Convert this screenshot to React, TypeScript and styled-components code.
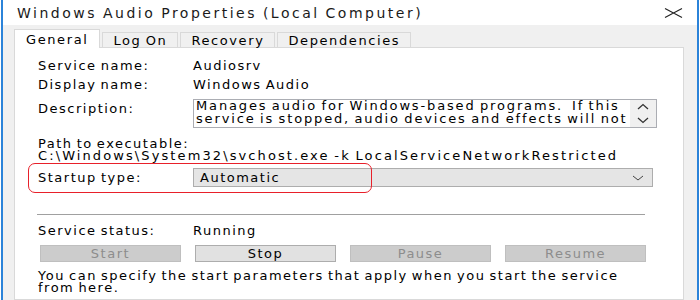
import React from 'react';
import styled, { createGlobalStyle } from 'styled-components';

const GlobalStyle = createGlobalStyle`
  html, body {
    margin: 0;
    padding: 0;
    background: #ffffff;
    overflow: hidden;
  }
  body {
    font-family: "DejaVu Sans", "Liberation Sans", sans-serif;
    font-size: 13px;
    color: #000;
  }
`;

const Window = styled.div`
  width: 694px;
  height: 300px;
  margin-left: 1px;
  border-left: 2px solid #2b83d9;
  border-right: 2px solid #2b83d9;
  display: flex;
  flex-direction: column;
  overflow: hidden;
`;

const TitleBar = styled.div`
  height: 25px;
  flex: none;
  background: #ffffff;
  display: flex;
  align-items: center;
  justify-content: space-between;
  padding: 0 14px 0 14px;
  font-size: 14px;
  letter-spacing: 2.5px;
  word-spacing: -1px;
  color: #1a1a1a;
`;

const CloseIcon = styled.svg`
  width: 19px;
  height: 10px;
`;

const Body = styled.div`
  flex: 1;
  background: #f0f0f0;
  padding: 4px 13px 0 11px;
  display: flex;
  flex-direction: column;
`;

const TabRow = styled.div`
  display: flex;
  align-items: flex-end;
  height: 19px;
  position: relative;
  z-index: 1;
`;

const Tab = styled.div<{ $active?: boolean }>`
  height: ${(p) => (p.$active ? 19 : 16)}px;
  padding: ${(p) => (p.$active ? '0 11px' : '1px 10px 0')};
  margin-right: 2px;
  background: ${(p) => (p.$active ? '#ffffff' : '#f0f0f0')};
  border: 1px solid #d9d9d9;
  border-bottom: ${(p) => (p.$active ? 'none' : '1px solid #d9d9d9')};
  display: flex;
  align-items: center;
  box-sizing: border-box;
  font-size: 13px;
  letter-spacing: 1.6px;
  word-spacing: -1.5px;
  white-space: nowrap;
`;

const Panel = styled.div`
  flex: 1;
  margin-top: -1px;
  background: #ffffff;
  border: 1px solid #d9d9d9;
  padding: 8px 30px 0 23px;
  display: flex;
  flex-direction: column;
  font-size: 13px;
  letter-spacing: 1.5px;
  word-spacing: -1.5px;
`;

const Row = styled.div<{ $h?: number; $mt?: number; $top?: boolean }>`
  display: flex;
  align-items: ${(p) => (p.$top ? 'flex-start' : 'center')};
  height: ${(p) => p.$h ?? 19}px;
  margin-top: ${(p) => p.$mt ?? 0}px;
  position: relative;
`;

const Label = styled.div<{ $mt?: number }>`
  width: 155px;
  flex: none;
  white-space: nowrap;
  margin-top: ${(p) => p.$mt ?? 0}px;
`;

const Value = styled.div`
  white-space: nowrap;
`;

const TextBox = styled.div`
  flex: 1;
  height: 29px;
  box-sizing: border-box;
  border: 1px solid #abadb3;
  display: flex;
  background: #fff;
`;

const BoxText = styled.div`
  flex: 1;
  padding: 0 2px;
  line-height: 12.5px;
  white-space: nowrap;
  overflow: hidden;
  letter-spacing: 1.85px;
`;

const Scroll = styled.div`
  width: 26px;
  flex: none;
  background: #f0f0f0;
  display: flex;
  flex-direction: column;
  align-items: center;
  justify-content: space-around;
`;

const Block = styled.div<{ $mt?: number; $ls?: number }>`
  margin-top: ${(p) => p.$mt ?? 0}px;
  line-height: 12px;
  white-space: nowrap;
  letter-spacing: ${(p) => p.$ls ?? 1.5}px;
`;

const Combo = styled.div`
  flex: 1;
  height: 19px;
  box-sizing: border-box;
  background: #e5e5e5;
  border: 1px solid #adadad;
  display: flex;
  align-items: center;
  justify-content: space-between;
  padding: 0 8px 0 6px;
`;

const Highlight = styled.div`
  position: absolute;
  left: -10px;
  top: -5px;
  width: 344px;
  height: 30px;
  border: 1.5px solid #e8202a;
  border-radius: 7px;
  box-sizing: border-box;
  pointer-events: none;
`;

const Separator = styled.div`
  height: 1px;
  background: #a0a0a0;
  margin: 27px 8px 0 -1px;
`;

const ButtonRow = styled.div`
  display: flex;
  gap: 14px;
  margin-top: 5px;
  padding-left: 2px;
`;

const Btn = styled.div<{ $disabled?: boolean }>`
  width: 141px;
  height: 17px;
  box-sizing: border-box;
  background: ${(p) => (p.$disabled ? '#cccccc' : '#e1e1e1')};
  border: 1px solid ${(p) => (p.$disabled ? '#bfbfbf' : '#adadad')};
  color: ${(p) => (p.$disabled ? '#8d8d8d' : '#000')};
  display: flex;
  align-items: center;
  justify-content: center;
`;

const Note = styled.div`
  margin-top: 8px;
  line-height: 12px;
  white-space: nowrap;
`;

const Chevron = ({ up }: { up?: boolean }) => (
  <svg width="12" height="7" viewBox="0 0 12 7">
    <path
      d={up ? 'M1 6 L6 1.5 L11 6' : 'M1 1 L6 5.5 L11 1'}
      fill="none"
      stroke="#333"
      strokeWidth="1.3"
    />
  </svg>
);

export default function App() {
  return (
    <>
      <GlobalStyle />
      <Window>
        <TitleBar>
          <span>Windows Audio Properties (Local Computer)</span>
          <CloseIcon viewBox="0 0 19 10">
            <path d="M1 0.5 L18 9.5 M18 0.5 L1 9.5" stroke="#222" strokeWidth="1.1" />
          </CloseIcon>
        </TitleBar>
        <Body>
          <TabRow>
            <Tab $active>General</Tab>
            <Tab>Log On</Tab>
            <Tab>Recovery</Tab>
            <Tab>Dependencies</Tab>
          </TabRow>
          <Panel>
            <Row>
              <Label>Service name:</Label>
              <Value>Audiosrv</Value>
            </Row>
            <Row>
              <Label>Display name:</Label>
              <Value>Windows Audio</Value>
            </Row>
            <Row $h={29} $mt={5} $top>
              <Label $mt={2}>Description:</Label>
              <TextBox>
                <BoxText>
                  Manages audio for Windows-based programs.&nbsp; If this
                  <br />
                  service is stopped, audio devices and effects will not
                </BoxText>
                <Scroll>
                  <Chevron up />
                  <Chevron />
                </Scroll>
              </TextBox>
            </Row>
            <Block $mt={10}>Path to executable:</Block>
            <Block $ls={2.1}>C:\Windows\System32\svchost.exe -k LocalServiceNetworkRestricted</Block>
            <Row $mt={6}>
              <Highlight />
              <Label>Startup type:</Label>
              <Combo>
                <span>Automatic</span>
                <svg width="12" height="6" viewBox="0 0 12 6">
                  <path d="M1 1 L6 5 L11 1" fill="none" stroke="#444" strokeWidth="1" />
                </svg>
              </Combo>
            </Row>
            <Separator />
            <Row $mt={6}>
              <Label>Service status:</Label>
              <Value>Running</Value>
            </Row>
            <ButtonRow>
              <Btn $disabled>Start</Btn>
              <Btn>Stop</Btn>
              <Btn $disabled>Pause</Btn>
              <Btn $disabled>Resume</Btn>
            </ButtonRow>
            <Note>
              You can specify the start parameters that apply when you start the service
              <br />
              from here.
            </Note>
          </Panel>
        </Body>
      </Window>
    </>
  );
}
